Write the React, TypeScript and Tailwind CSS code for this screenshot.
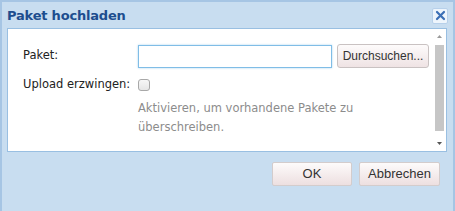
export default function App() {
  return (
    <div className="w-[455px] h-[211px] overflow-hidden bg-[#c8ddf0] border-x-2 border-t-2 border-[#a6c5e4] flex flex-col font-['DejaVu_Sans',sans-serif]">
      <div className="h-[26px] flex items-center justify-between pl-[5px] pr-[5px] pt-[1px]">
        <span className="text-[13px] font-bold text-[#1d4d8e] tracking-[-0.2px]">Paket hochladen</span>
        <button className="w-[16px] h-[16px] bg-[#eef5fc] border border-[#b7d0ea] rounded-[2px] flex items-center justify-center">
          <svg width="11" height="11" viewBox="0 0 11 11">
            <path d="M2 2L9 9M9 2L2 9" stroke="#3b6fb6" strokeWidth="2.2" strokeLinecap="round" />
          </svg>
        </button>
      </div>
      <div className="ml-[5px] mr-[6px] h-[124px] bg-white border border-[#99bfe2] flex">
        <div className="flex-1 pl-[15px] pt-[15px] text-[11.5px]">
          <div className="flex items-center h-[24px]">
            <span className="w-[115px] text-[#222]">Paket:</span>
            <div className="w-[194px] h-[23px] border border-[#80bde6] shadow-[0_0_2px_#a9d4f0]"></div>
            <button className="ml-[5px] w-[92px] h-[24px] rounded-[3px] border border-[#c9c2c2] bg-gradient-to-b from-[#fdfbfb] to-[#efe3e4] text-[12px] text-[#333] font-['Liberation_Sans',sans-serif]">
              Durchsuchen...
            </button>
          </div>
          <div className="flex items-center mt-[9px] h-[16px]">
            <span className="w-[115px] text-[#222]">Upload erzwingen:</span>
            <div className="w-[12px] h-[12px] rounded-[3px] border border-[#a8a8a8] bg-gradient-to-b from-[#f7f7f7] to-[#e6e6e6]"></div>
          </div>
          <p className="ml-[115px] mt-[6px] text-[#8c8c8c] leading-[19px] w-[280px]">
            Aktivieren, um vorhandene Pakete zu überschreiben.
          </p>
        </div>
        <div className="w-[12px] mr-[1px] flex flex-col items-center py-[2px]">
          <svg width="7" height="5" viewBox="0 0 7 5" className="mt-[3px]">
            <path d="M3.5 1L6 4H1Z" fill="#9a9a9a" />
          </svg>
          <div className="w-[9px] mt-[6px] h-[86px] bg-[#c6c6c6]"></div>
          <div className="flex-1"></div>
          <svg width="7" height="5" viewBox="0 0 7 5" className="mb-[3px]">
            <path d="M1 1H6L3.5 4Z" fill="#555" />
          </svg>
        </div>
      </div>
      <div className="flex justify-end gap-[7px] mt-[10px] pr-[13px] font-['Liberation_Sans',sans-serif] text-[13px] text-[#333]">
        <button className="w-[80px] h-[24px] rounded-[2px] border border-[#d3cccc] bg-gradient-to-b from-[#fdfbfb] to-[#eddfe0]">OK</button>
        <button className="w-[81px] h-[24px] rounded-[2px] border border-[#d3cccc] bg-gradient-to-b from-[#fdfbfb] to-[#eddfe0]">Abbrechen</button>
      </div>
    </div>
  );
}
